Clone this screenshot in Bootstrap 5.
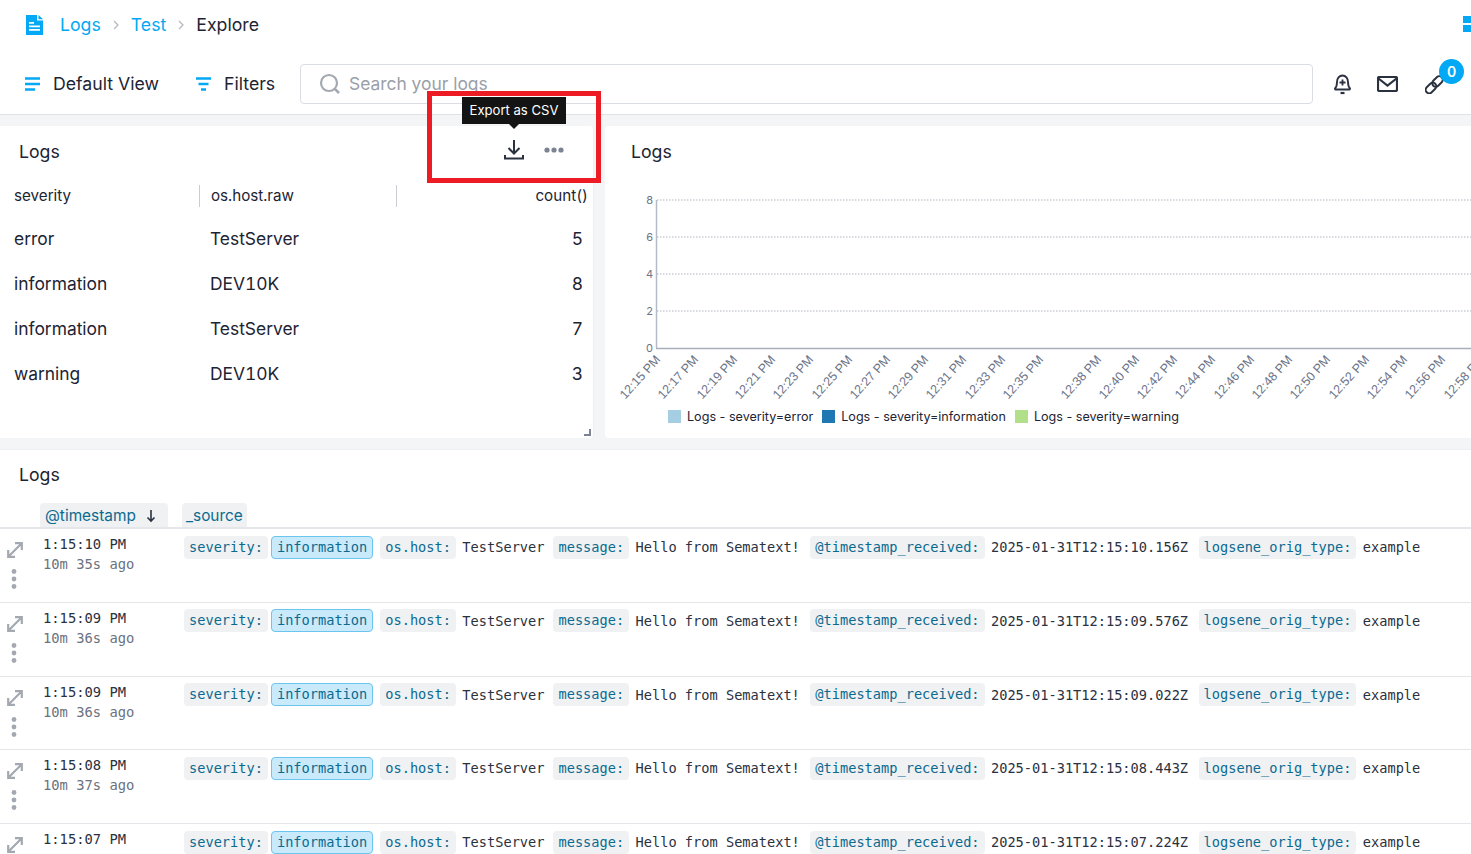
<!DOCTYPE html>
<html lang="en"><head><meta charset="utf-8"><title>Logs Explore</title>
<link href="https://cdn.jsdelivr.net/npm/bootstrap@5.3.0/dist/css/bootstrap.min.css" rel="stylesheet">
<style>
html,body{height:854px;overflow:hidden}
body{font-family:Inter,"Liberation Sans",sans-serif;color:#1d2433;background:#f4f5f7;position:relative;width:1471px}
a{text-decoration:none}
.topbar{background:#fff;height:115px;border-bottom:1px solid #dfe2e6;position:relative}
.crumbrow{height:50px;padding-left:25px;font-size:17.7px;position:relative}
.crumbrow a{color:#03a9f4}
.logomark{flex:none;margin-right:15px}
.crumbsep{color:#b5bac2;margin:0 12px;width:6px}
.gridmark{position:absolute;right:0;top:16px;width:8px;display:grid;gap:2px}
.gridmark i{display:block;width:8px;height:7px;background:#03a9f4}
.toolrow{height:64px;padding:4px 0 0 25px;font-size:17.7px}
.toolitem{gap:12px;width:170px}
.toolitem.second{width:105px}
.searchbox{width:1013px;height:40px;border:1px solid #d9dce1;border-radius:4px;padding-left:18px;gap:8px;color:#9aa0a9;font-size:17.4px}
.tooliconset{margin-left:19px;gap:24px;position:relative}
.linkwrap{margin-left:3px}
.pillcount{position:absolute;right:-18px;top:-15px;width:25px;height:25px;border-radius:50%;background:#03a9f4;color:#fff;font-size:14px;font-weight:600}
.panelrow{margin-top:11px;gap:11px;height:312px}
.leftpanel{width:594px;background:#fff;position:relative;border-radius:0 4px 4px 0;border-right:1px solid #eceef1}
.rightpanel{width:866px;background:#fff;position:relative;border-radius:4px 0 0 4px;overflow:hidden}
.paneltitle{font-size:17.7px;padding:14px 0 0 19px;height:51px;line-height:24px}
.righttitle{padding-left:26px}
.tablerow{display:grid;grid-template-columns:185px 197px 192px;padding-left:14px;height:45px;font-size:17.4px;align-items:center;font-variant-numeric:tabular-nums}
.tablehead{height:40px;font-size:15.2px;padding-bottom:2px}
.tablehead span+span{border-left:1px solid #c9cdd3;padding-left:11px}
.tablehead span:last-child{text-align:right}
.tablebody span:nth-child(2){padding-left:11px}
.tablebody span:last-child{text-align:right;padding-right:5px}
.dragmark{position:absolute;right:2px;bottom:2px;width:7px;height:7px;border-right:2px solid #7c8493;border-bottom:2px solid #7c8493}
.chartlayer{position:absolute;top:0;left:0}
.legendrow{position:absolute;left:63px;top:283px;font-size:12.6px;gap:9px;line-height:16px;white-space:nowrap}
.legendrow i{display:inline-block;width:13px;height:13px;margin-right:6px;vertical-align:-2px}
.swatch-error{background:#a6cee3}
.swatch-info{background:#1f78b4}
.swatch-warn{background:#b2df8a}
.logspanel{margin-top:11px;background:#fff;height:420px;border-top:1px solid #eceef1;overflow:hidden}
.logstitle{height:52px;padding:13px 0 0 19px;font-size:17.7px;line-height:24px}
.colheads{height:27px;padding-left:40px;gap:14px;font-size:15.4px;color:#0b6a8f;border-bottom:2px solid #e4e6e9;align-items:flex-end}
.colhead{background:#eff1f3;height:24px;padding:0 5px;line-height:25px;border-radius:4px 4px 0 0}
.colhead.first{width:128px}
.colhead.first svg{margin:0 7px 4px 0;align-self:flex-end}
.colhead.next{width:65px;padding-left:4px}
.logrow{height:73.75px;border-bottom:1px solid #e4e6e9;font-family:"DejaVu Sans Mono","Liberation Mono",monospace;font-size:13.65px;position:relative}
.sideicons{width:43px;padding:13px 0 0 7px;gap:11px}
.timecol{width:141px;padding-top:5px;line-height:20px;color:#2a3140;font-size:13.8px}
.timecol small{display:block;color:#6b7280;font-size:13.8px}
.fieldline{padding-top:6px;white-space:nowrap;line-height:22px;height:30px;color:#2a3140}
.fieldkey{background:#eff1f3;color:#0b6a8f;border-radius:4px;padding:0 5px;height:23px;display:inline-block;margin-right:6.4px}
.fieldkey.tight{margin-right:3px}
.fieldinfo{background:#c9eafb;color:#0b6a8f;border:1px solid #6cc5ee;border-radius:4px;padding:0 5px;height:23px;line-height:21px;display:inline-block;margin-right:7px}
.fieldval{margin-right:9px}
.fieldval.wide{margin-right:10.5px}
.redframe{position:absolute;left:427px;top:91px;width:174px;height:92px;border:5px solid #ed1c24;pointer-events:none}
.exporttip{position:absolute;left:462px;top:97px;width:104px;height:27px;background:#141414;color:#fff;font-size:13.1px;line-height:27px;text-align:center}
.exporttip::after{content:"";position:absolute;left:47px;top:27px;border:5px solid transparent;border-top-color:#141414;border-bottom:0}
.panelactions{position:absolute;left:504px;top:14px;gap:20px}
</style></head><body>
<header class="topbar">
  <div class="crumbrow d-flex align-items-center">
    <svg width="20" height="20" viewBox="0 0 20 20" class="logomark"><path fill="#03a9f4" d="M1 0h11l0 5.500h6V20H1z"/><path fill="#03a9f4" d="M13.500 0 18 4.300h-4.500z"/><path fill="#fff" d="M4 7h5v1.700H4zM4 10.500h11v1.700H4zM4 14h11v1.700H4z"/></svg>
    <a href="#">Logs</a><svg class="crumbsep" viewBox="0 0 6 10" height="10"><path d="M1 1l4 4-4 4" fill="none" stroke="#b5bac2" stroke-width="1.300"/></svg>
    <a href="#">Test</a><svg class="crumbsep" viewBox="0 0 6 10" height="10"><path d="M1 1l4 4-4 4" fill="none" stroke="#b5bac2" stroke-width="1.300"/></svg>
    <span>Explore</span>
    <div class="gridmark"><i></i><i></i></div>
  </div>
  <div class="toolrow d-flex align-items-center">
    <div class="toolitem d-flex align-items-center"><svg width="16" height="14" viewBox="0 0 16 14"><path d="M0 1.500h15M0 7h15M0 12.500h10" stroke="#03a9f4" stroke-width="2.400" fill="none"/></svg><span>Default View</span></div>
    <div class="toolitem second d-flex align-items-center"><svg width="17" height="14" viewBox="0 0 17 14"><path d="M1 1.500h15M3.500 7h10M6 12.500h5" stroke="#03a9f4" stroke-width="2.400" fill="none"/></svg><span>Filters</span></div>
    <div class="searchbox d-flex align-items-center"><svg width="22" height="22" viewBox="0 0 22 22"><circle cx="10" cy="10" r="8" fill="none" stroke="#a4a9b1" stroke-width="2.200"/><path d="M15.800 15.800 20 20" stroke="#a4a9b1" stroke-width="2.600"/></svg><span>Search your logs</span></div>
    <div class="tooliconset d-flex align-items-center">
      <svg width="21" height="22" viewBox="0 0 21 22" fill="none" stroke="#2a3140" stroke-width="1.900"><path d="M3 15.500c1.500-1.500 2-3 2-6.500 0-3.500 2.300-6.500 5.500-6.500S16 5.500 16 9c0 3.500.5 5 2 6.500 0 .5 0 1-.5 1h-14c-.5 0-.5-.5-.5-1z"/><path d="M10.500 6.500v6M7.500 9.500h6" stroke-width="1.800"/><path d="M8.500 20h4" stroke-width="2.200"/></svg>
      <svg width="21" height="16" viewBox="0 0 21 16" fill="none" stroke="#2a3140" stroke-width="2.200"><rect x="1" y="1" width="19" height="14" rx="1.500"/><path d="M1.500 2.500 10.500 9.500 19.500 2.500"/></svg>
      <span class="linkwrap position-relative d-inline-flex"><svg width="21" height="20" viewBox="0 0 21 20" fill="none" stroke="#2a3140" stroke-width="1.900"><rect x="-6" y="-3.500" width="12" height="7" rx="3.500" transform="translate(6 14) rotate(-45)"/><rect x="-6" y="-3.500" width="12" height="7" rx="3.500" transform="translate(12.500 7.500) rotate(-45)"/></svg><span class="pillcount d-flex align-items-center justify-content-center">0</span></span>
    </div>
  </div>
</header>

<section class="panelrow d-flex">
  <div class="leftpanel">
    <div class="paneltitle">Logs</div>
    <div class="panelactions d-flex align-items-center">
      <svg width="20" height="20" viewBox="0 0 20 20" fill="none" stroke="#2a3140" stroke-width="2"><path d="M10 0v13M4.500 8 10 13.500 15.500 8M1 15v3.500h18V15"/></svg>
      <svg width="20" height="6" viewBox="0 0 20 6" fill="#7c8493"><circle cx="3" cy="3" r="2.600"/><circle cx="10" cy="3" r="2.600"/><circle cx="17" cy="3" r="2.600"/></svg>
    </div>
    <div class="tablerow tablehead"><span>severity</span><span>os.host.raw</span><span>count()</span></div>
    <div class="tablerow tablebody"><span>error</span><span>TestServer</span><span>5</span></div>
    <div class="tablerow tablebody"><span>information</span><span>DEV10K</span><span>8</span></div>
    <div class="tablerow tablebody"><span>information</span><span>TestServer</span><span>7</span></div>
    <div class="tablerow tablebody"><span>warning</span><span>DEV10K</span><span>3</span></div>
    <span class="dragmark"></span>
  </div>
  <div class="rightpanel">
    <div class="paneltitle righttitle">Logs</div>
    <svg id="chartsvg" class="chartlayer" width="866" height="312"></svg>
    <div class="legendrow d-flex">
      <span><i class="swatch-error"></i>Logs - severity=error</span>
      <span><i class="swatch-info"></i>Logs - severity=information</span>
      <span><i class="swatch-warn"></i>Logs - severity=warning</span>
    </div>
  </div>
</section>

<section class="logspanel">
  <div class="logstitle">Logs</div>
  <div class="colheads d-flex">
    <div class="colhead first d-flex justify-content-between">@timestamp <svg width="10" height="14" viewBox="0 0 10 14" fill="none" stroke="#2a3140" stroke-width="1.600"><path d="M5 1v11M1.500 8.500 5 12l3.500-3.500"/></svg></div>
    <div class="colhead next">_source</div>
  </div>
  <div id="logrows"></div>
</section>

<div class="redframe"></div>
<div class="exporttip">Export as CSV</div>

<script src="https://cdn.jsdelivr.net/npm/bootstrap@5.3.0/dist/js/bootstrap.bundle.min.js"></script>
<script>
const rows=[["1:15:10 PM","10m 35s ago","2025-01-31T12:15:10.156Z"],["1:15:09 PM","10m 36s ago","2025-01-31T12:15:09.576Z"],["1:15:09 PM","10m 36s ago","2025-01-31T12:15:09.022Z"],["1:15:08 PM","10m 37s ago","2025-01-31T12:15:08.443Z"],["1:15:07 PM","","2025-01-31T12:15:07.224Z"]];
document.getElementById('logrows').innerHTML=rows.map(r=>`<div class="logrow d-flex">
<div class="sideicons d-flex flex-column"><svg width="16" height="16" viewBox="0 0 16 16" fill="none" stroke="#a4a9b1" stroke-width="2.200"><path d="M2 14 14 2M8 1.200h6.800v6.800M1.200 8v6.800H8"/></svg><svg width="16" height="20" viewBox="0 0 16 20" fill="#a4a9b1"><circle cx="7" cy="2.500" r="2.400"/><circle cx="7" cy="10" r="2.400"/><circle cx="7" cy="17.500" r="2.400"/></svg></div>
<div class="timecol">${r[0]}<small>${r[1]}</small></div>
<div class="fieldline d-flex align-items-center"><span class="fieldkey tight">severity:</span><span class="fieldinfo">information</span><span class="fieldkey">os.host:</span><span class="fieldval">TestServer</span><span class="fieldkey">message:</span><span class="fieldval wide">Hello from Sematext!</span><span class="fieldkey">@timestamp_received:</span><span class="fieldval wide">${r[2]}</span><span class="fieldkey">logsene_orig_type:</span><span>example</span></div>
</div>`).join('');
const xs=[56,94,133,171,209,248,286,324,362,401,439,497,535,573,611,650,688,726,765,803,841,880];
const lb=["12:15","12:17","12:19","12:21","12:23","12:25","12:27","12:29","12:31","12:33","12:35","12:38","12:40","12:42","12:44","12:46","12:48","12:50","12:52","12:54","12:56","12:58"];
let s='';
[[74,'8'],[111,'6'],[148,'4'],[185,'2']].forEach(([y,t])=>{s+=`<line x1="52" x2="866" y1="${y}" y2="${y}" stroke="#aeb3bd" stroke-dasharray="1.500 1.500"/><text x="48" y="${y+4}" text-anchor="end" font-size="11" fill="#6b7488" font-family="Inter">${t}</text>`});
s+=`<text x="48" y="226" text-anchor="end" font-size="11" fill="#6b7488" font-family="Inter">0</text><line x1="51.500" x2="51.500" y1="74" y2="222" stroke="#b5bac6" stroke-width="1.500"/><line x1="51" x2="866" y1="222.500" y2="222.500" stroke="#a9aebb" stroke-width="1.500"/>`;
xs.forEach((x,i)=>{s+=`<text transform="translate(${x} 234) rotate(-48)" text-anchor="end" font-size="12.500" fill="#6b7488" font-family="Liberation Sans">${lb[i]} PM</text>`});
document.getElementById('chartsvg').innerHTML=s;
</script>
</body></html>
